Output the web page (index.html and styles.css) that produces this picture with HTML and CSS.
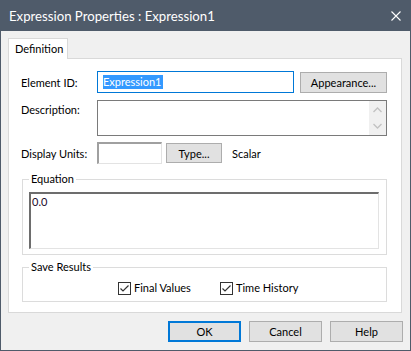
FILE: index.html
```html
<!DOCTYPE html>
<html lang="en">
<head>
    <meta charset="UTF-8">
    <title>Expression Properties : Expression1</title>
    <link rel="stylesheet" href="styles.css">
</head>
<body>
    <div class="window">
        <div class="titlebar">
            <span class="title">Expression Properties : Expression1</span>
            <svg class="close" width="10" height="10" viewBox="0 0 10 10">
                <path d="M0.5 0.5 L9.5 9.5 M9.5 0.5 L0.5 9.5" stroke="#fff" stroke-width="1.1" fill="none"/>
            </svg>
        </div>

        <div class="client">
            <div class="tabs">
                <div class="tab">Definition</div>
            </div>

            <div class="panel">
                <div class="row row-id">
                    <span class="lbl">Element ID:</span>
                    <div class="edit edit-id"><span class="sel">Expression1</span></div>
                    <button class="btn btn-appear">Appearance...</button>
                </div>

                <div class="row row-desc">
                    <span class="lbl lbl-top">Description:</span>
                    <div class="edit edit-desc">
                        <div class="vscroll">
                            <svg width="9" height="6" viewBox="0 0 9 6"><path d="M0.5 5 L4.5 1 L8.5 5" stroke="#c2c2c2" stroke-width="1.3" fill="none"/></svg>
                            <svg width="9" height="6" viewBox="0 0 9 6"><path d="M0.5 1 L4.5 5 L8.5 1" stroke="#c2c2c2" stroke-width="1.3" fill="none"/></svg>
                        </div>
                    </div>
                </div>

                <div class="row row-units">
                    <span class="lbl">Display Units:</span>
                    <div class="sunken sunken-units"></div>
                    <button class="btn btn-type">Type...</button>
                    <span class="scalar">Scalar</span>
                </div>

                <fieldset class="group group-eq">
                    <legend>Equation</legend>
                    <div class="sunken sunken-eq">0.0</div>
                </fieldset>

                <fieldset class="group group-save">
                    <legend>Save Results</legend>
                    <div class="checks">
                        <label class="check">
                            <span class="box"><svg width="11" height="11" viewBox="0 0 11 11"><path d="M1.5 5.5 L4 8 L9.5 2.5" stroke="#333" stroke-width="1.2" fill="none"/></svg></span>
                            Final Values
                        </label>
                        <label class="check">
                            <span class="box"><svg width="11" height="11" viewBox="0 0 11 11"><path d="M1.5 5.5 L4 8 L9.5 2.5" stroke="#333" stroke-width="1.2" fill="none"/></svg></span>
                            Time History
                        </label>
                    </div>
                </fieldset>
            </div>

            <div class="buttons">
                <button class="btn btn-dlg btn-default">OK</button>
                <button class="btn btn-dlg">Cancel</button>
                <button class="btn btn-dlg">Help</button>
            </div>
        </div>
    </div>
</body>
</html>
```

FILE: styles.css
```css
* {
    box-sizing: border-box;
}
body {
    margin: 0;
    font-family: Lato, "Liberation Sans", sans-serif;
    font-size: 11px;
    color: #000;
}
.window {
    width: 411px;
    height: 351px;
    border: 1px solid #4f5b6a;
    border-top: none;
    display: flex;
    flex-direction: column;
    background-color: #f0f0f0;
}
.titlebar {
    height: 31px;
    background-color: #4f5b6a;
    color: #fff;
    display: flex;
    align-items: center;
    justify-content: space-between;
    padding: 0 9px 0 8px;
    font-size: 13.2px;
}
.close {
    display: block;
}
.client {
    flex: 1;
    padding: 7px 8px 8px 7px;
    display: flex;
    flex-direction: column;
}
.tabs {
    display: flex;
    margin-bottom: -1px;
}
.tab {
    position: relative;
    z-index: 1;
    width: 60px;
    height: 21px;
    background-color: #fff;
    border: 1px solid #d9d9d9;
    border-bottom: none;
    padding: 2px 0 0 6px;
    line-height: 16px;
}
.panel {
    height: 255px;
    background-color: #fff;
    border: 1px solid #d9d9d9;
    padding: 12px 14px 0 12px;
}
.row {
    display: flex;
    align-items: center;
}
.lbl {
    width: 76px;
    flex-shrink: 0;
}
.lbl-top {
    align-self: flex-start;
    padding-top: 3px;
}
.edit {
    background-color: #fff;
    border: 1px solid #7a7a7a;
}
.edit-id {
    width: 197px;
    height: 22px;
    border-color: #0078d7;
    padding: 2px 0 0 5px;
    line-height: 15px;
}
.sel {
    background-color: #3399ff;
    color: #fff;
    display: inline-block;
    line-height: 14px;
    padding-right: 1px;
}
.btn {
    font-family: inherit;
    font-size: 11px;
    color: #000;
    background-color: #e1e1e1;
    border: 1px solid #adadad;
    padding: 0;
    margin: 0;
    height: 21px;
}
.btn-appear {
    width: 87px;
    margin-left: 6px;
    align-self: flex-start;
    margin-top: 1px;
}
.row-desc {
    margin-top: 7px;
}
.edit-desc {
    width: 291px;
    height: 36px;
    display: flex;
    justify-content: flex-end;
}
.vscroll {
    width: 17px;
    background-color: #f0f0f0;
    display: flex;
    flex-direction: column;
    align-items: center;
    justify-content: space-between;
    padding: 6px 0 6px;
}
.vscroll svg {
    display: block;
}
.row-units {
    margin-top: 6px;
}
.sunken {
    background-color: #fff;
    border-top: 2px solid #6d6d6d;
    border-left: 2px solid #6d6d6d;
    border-right: 1px solid #e3e3e3;
    border-bottom: 1px solid #e3e3e3;
}
.sunken-units {
    width: 65px;
    height: 22px;
    border-top-color: #a0a0a0;
    border-left-color: #a0a0a0;
}
.btn-type {
    width: 56px;
    height: 20px;
    margin-left: 4px;
}
.scalar {
    margin-left: 10px;
}
.group {
    margin: 0 0 0 1px;
    border: 1px solid #dcdcdc;
    min-width: 0;
}
.group legend {
    padding: 0 2px;
    line-height: 16px;
}
.group-eq {
    margin-top: 7px;
    padding: 5px 7px 5px 6px;
}
.sunken-eq {
    height: 57px;
    padding: 1px 0 0 1px;
    line-height: 14px;
    color: #1a0a2a;
}
.group-save {
    margin-top: 4px;
    padding: 5px 7px 5px 6px;
}
.checks {
    display: flex;
    padding-left: 89px;
    line-height: 16px;
}
.check {
    display: flex;
    align-items: center;
    width: 102px;
}
.box {
    width: 13px;
    height: 13px;
    border: 1px solid #333;
    background-color: #fff;
    margin-right: 3px;
    display: flex;
    align-items: center;
    justify-content: center;
}
.box svg {
    display: block;
}
.buttons {
    display: flex;
    justify-content: flex-end;
    gap: 8px;
    margin-top: 8px;
    margin-right: -1px;
}
.btn-dlg {
    width: 73px;
}
.btn-default {
    border: 2px solid #0078d7;
}
```
